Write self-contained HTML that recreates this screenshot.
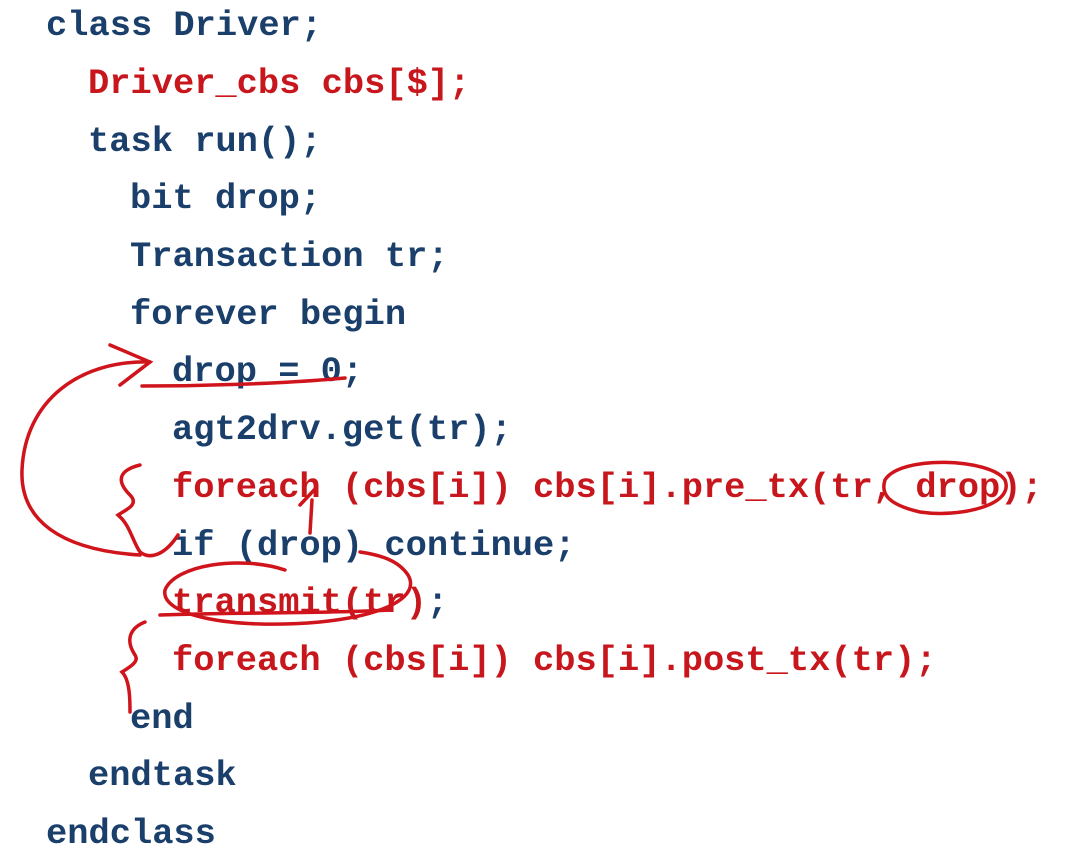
<!DOCTYPE html>
<html><head><meta charset="utf-8"><style>
body{margin:0;width:1084px;height:849px;background:#fff;overflow:hidden;position:relative}
.l{position:absolute;font-family:"Liberation Mono",monospace;font-weight:bold;font-size:35.4px;line-height:58px;white-space:pre;color:#1b3f6b}
.r{color:#c8161d}
svg{position:absolute;left:0;top:0}
</style></head><body>
<div class="l" style="left:46px;top:-3px">class Driver;</div>
<div class="l r" style="left:88px;top:55px">Driver_cbs cbs[$];</div>
<div class="l" style="left:88px;top:113px">task run();</div>
<div class="l" style="left:130px;top:170px">bit drop;</div>
<div class="l" style="left:130px;top:228px">Transaction tr;</div>
<div class="l" style="left:130px;top:286px">forever begin</div>
<div class="l" style="left:172px;top:343px">drop = 0;</div>
<div class="l" style="left:172px;top:401px">agt2drv.get(tr);</div>
<div class="l r" style="left:172px;top:459px">foreach (cbs[i]) cbs[i].pre_tx(tr, drop);</div>
<div class="l" style="left:172px;top:517px">if (drop) continue;</div>
<div class="l r" style="left:172px;top:574px">transmit(tr)<span style="color:#1b3f6b">;</span></div>
<div class="l r" style="left:172px;top:632px">foreach (cbs[i]) cbs[i].post_tx(tr);</div>
<div class="l" style="left:130px;top:690px">end</div>
<div class="l" style="left:88px;top:747px">endtask</div>
<div class="l" style="left:46px;top:805px">endclass</div>
<svg width="1084" height="849" fill="none" stroke="#d0141c" stroke-width="3.5" stroke-linecap="round">
<path d="M140 555 C60 550 20 520 22 470 C25 400 80 360 150 362"/>
<path d="M110 345 L150 362 L120 385"/>
<path d="M142 386 C200 386 280 384 345 378"/>
<path d="M140 465 C120 470 115 480 130 495 C140 505 125 510 118 515 C130 525 132 540 140 552 C150 560 165 555 178 535"/>
<path d="M310 533 L312 500 M300 505 L316 488"/>
<path d="M885 480 C900 455 990 458 1005 480 C1015 505 960 518 920 512 C890 505 880 495 885 480"/>
<path d="M285 570 C240 555 175 565 165 590 C160 615 230 630 320 622 C390 615 420 595 408 575 C398 560 380 555 360 552"/>
<path d="M160 615 C230 612 320 614 390 610"/>
<path d="M145 622 C130 628 125 640 135 655 C140 662 128 668 122 672 C130 680 130 700 130 712"/>
</svg>
</body></html>
